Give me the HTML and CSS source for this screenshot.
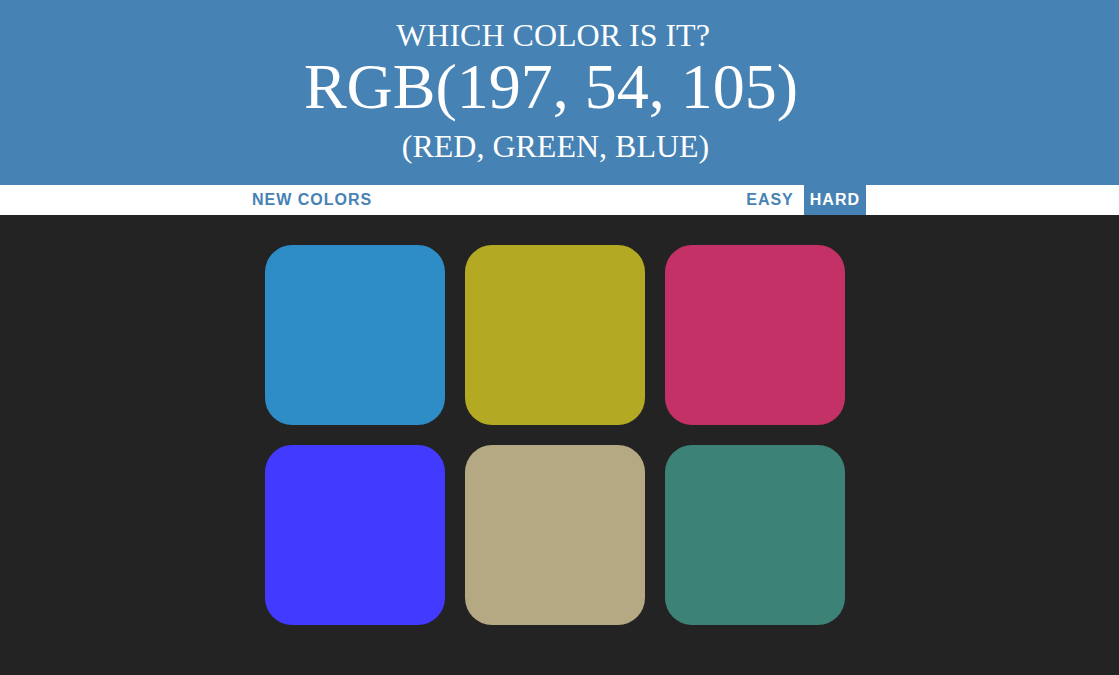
FILE: index.html
```html
<!DOCTYPE html>
<html>
<head>
<meta charset="utf-8">
<title>Color Game</title>
<link rel="stylesheet" href="styles.css">
</head>
<body>
<header class="banner">
  <div class="title-line">WHICH COLOR IS IT?</div>
  <div class="color-display">RGB(197, 54, 105)</div>
  <div class="sub-line">(RED, GREEN, BLUE)</div>
</header>
<nav class="stripe">
  <div class="stripe-inner">
    <button class="btn">NEW COLORS</button>
    <span class="message"></span>
    <button class="btn">EASY</button>
    <button class="btn selected">HARD</button>
  </div>
</nav>
<main class="board">
  <div class="grid">
    <div class="square sq1"></div>
    <div class="square sq2"></div>
    <div class="square sq3"></div>
    <div class="square sq4"></div>
    <div class="square sq5"></div>
    <div class="square sq6"></div>
  </div>
</main>
</body>
</html>
```
FILE: styles.css
```css
html, body {
  margin: 0;
  padding: 0;
  background: #232323;
  height: 100%;
}
body {
  font-family: "Liberation Sans", Arial, sans-serif;
}
.banner {
  background: #4682b4;
  color: #fff;
  font-family: "Liberation Serif", "Times New Roman", serif;
  text-align: center;
  padding: 17px 8px 0 0;
  height: 168px;
  box-sizing: content-box;
}
.title-line {
  font-size: 32px;
  line-height: 36px;
  padding-right: 5px;
}
.color-display {
  font-size: 64px;
  line-height: 67px;
  padding-right: 9px;
}
.sub-line {
  font-size: 32px;
  line-height: 52px;
}
.stripe {
  background: #fff;
  height: 30px;
  display: flex;
  justify-content: center;
  padding-right: 7px;
}
.stripe-inner {
  display: flex;
  gap: 4px;
  height: 30px;
}
.btn {
  border: none;
  background: none;
  margin: 0;
  padding: 0 6px;
  height: 30px;
  font-family: "Liberation Sans", Arial, sans-serif;
  font-size: 16px;
  font-weight: 700;
  letter-spacing: 1px;
  text-transform: uppercase;
  color: #4682b4;
  cursor: pointer;
}
.btn.selected {
  background: #4682b4;
  color: #fff;
}
.message {
  width: 354px;
}
.board {
  display: flex;
  justify-content: center;
  padding: 20px 9px 0 0;
}
.grid {
  width: 600px;
  display: flex;
  flex-wrap: wrap;
}
.square {
  width: 180px;
  height: 180px;
  margin: 10px;
  border-radius: 15%;
}
.sq1 { background: rgb(46, 140, 198); }
.sq2 { background: rgb(180, 169, 35); }
.sq3 { background: rgb(196, 49, 103); }
.sq4 { background: rgb(67, 58, 255); }
.sq5 { background: rgb(180, 169, 131); }
.sq6 { background: rgb(61, 130, 119); }
```
